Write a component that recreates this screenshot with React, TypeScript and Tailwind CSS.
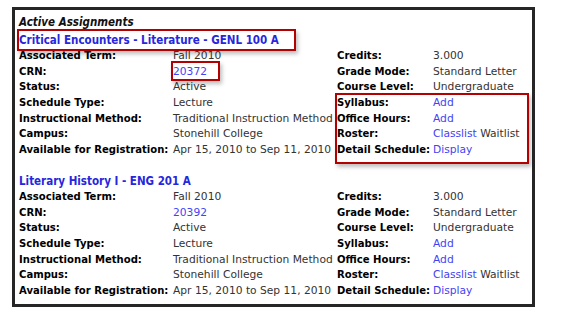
const LEFT_A = [
  ['Associated Term:', 'Fall 2010'],
  ['CRN:', '20372'],
  ['Status:', 'Active'],
  ['Schedule Type:', 'Lecture'],
  ['Instructional Method:', 'Traditional Instruction Method'],
  ['Campus:', 'Stonehill College'],
  ['Available for Registration:', 'Apr 15, 2010 to Sep 11, 2010'],
]

const LEFT_B = LEFT_A.map(([k, v]) => [k, v === '20372' ? '20392' : v])

const RIGHT = ['Credits:', 'Grade Mode:', 'Course Level:', 'Syllabus:', 'Office Hours:', 'Roster:', 'Detail Schedule:']

const label = 'font-bold text-black text-[11.2px]'
const val = "font-['DejaVu_Sans',sans-serif] text-[10.7px] text-[#333]"
const link = "font-['DejaVu_Sans',sans-serif] text-[10.7px] text-[#4343f5]"
const redBox = 'absolute border-2 border-[#b30000] shadow-[2px_3px_4px_rgba(0,0,0,0.25)]'

function RightValue({ i }: { i: number }) {
  if (i === 0) return <span className={val}>3.000</span>
  if (i === 1) return <span className={val}>Standard Letter</span>
  if (i === 2) return <span className={val}>Undergraduate</span>
  if (i === 3 || i === 4) return <span className={link}>Add</span>
  if (i === 5)
    return (
      <span>
        <span className={link}>Classlist</span> <span className={val}>Waitlist</span>
      </span>
    )
  return <span className={link}>Display</span>
}

function Course({ title, rows, marked }: { title: string; rows: string[][]; marked?: boolean }) {
  return (
    <div>
      <div className="relative h-[15px] font-bold text-[#2626dd]">
        {title}
        {marked && <div className={`${redBox} left-[-2px] top-[-4px] h-[22px] w-[279px]`} />}
      </div>
      <div className="flex">
        <div className="w-[318px]">
          {rows.map(([k, v], i) => (
            <div key={k} className="flex h-[15.7px] items-center">
              <div className={`w-[154px] shrink-0 ${label}`}>{k}</div>
              <div className={`relative whitespace-nowrap ${i === 1 ? link : val}`}>
                {v}
                {marked && i === 1 && <div className={`${redBox} left-[-2px] top-[-3px] h-[20px] w-[49px]`} />}
              </div>
            </div>
          ))}
        </div>
        <div className="relative">
          {RIGHT.map((k, i) => (
            <div key={k} className="flex h-[15.7px] items-center">
              <div className={`w-[96px] shrink-0 ${label}`}>{k}</div>
              <div className="whitespace-nowrap">
                <RightValue i={i} />
              </div>
            </div>
          ))}
          {marked && <div className={`${redBox} left-[-2px] top-[45px] h-[71px] w-[194px]`} />}
        </div>
      </div>
    </div>
  )
}

export default function App() {
  return (
    <div className="h-[321px] w-[572px] bg-white pl-[12px] pt-[7px] font-['DejaVu_Sans_Condensed','DejaVu_Sans',sans-serif] text-[11.5px] leading-[15.7px]">
      <div className="h-[300px] w-[523px] border-[3px] border-[#262626] px-[4px] pt-[5px]">
        <div className="h-[18px] font-bold italic text-[#111]">Active Assignments</div>
        <Course title="Critical Encounters - Literature - GENL 100 A" rows={LEFT_A} marked />
        <div className="h-[16px]" />
        <Course title="Literary History I - ENG 201 A" rows={LEFT_B} />
      </div>
    </div>
  )
}
